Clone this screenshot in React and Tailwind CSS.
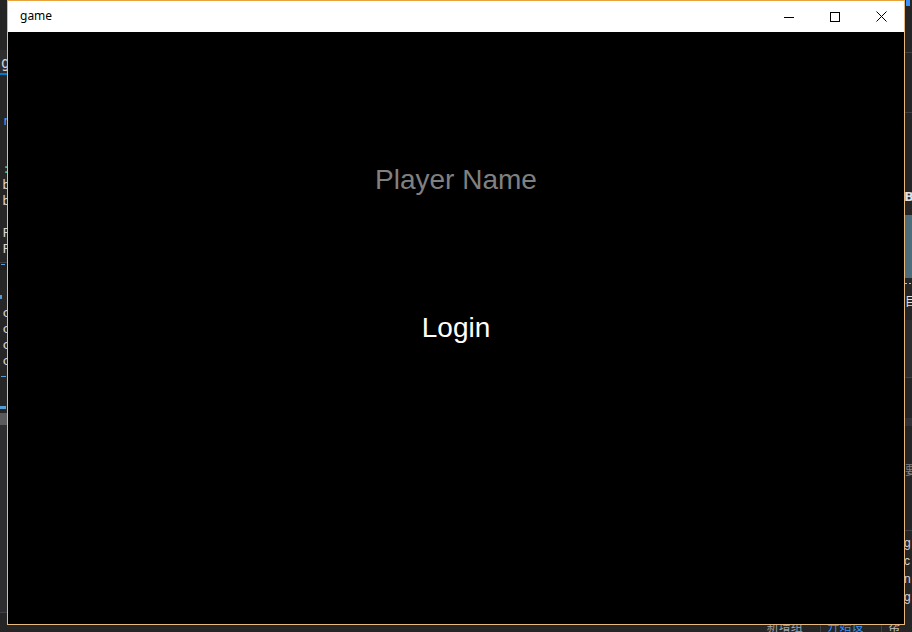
import React from "react";

// fragments of the code editor that peek out from behind the game window
const Glyph = ({ children, className = "" }) => (
  <div className={`h-4 flex justify-end leading-4 overflow-hidden ${className}`}>
    <span className="mr-[-3px]">{children}</span>
  </div>
);

const LeftEdge = () => (
  <div className="w-[7px] h-full flex flex-col bg-[#252526] overflow-hidden font-['DejaVu_Sans_Mono',monospace] text-[13px] text-[#d4d4d4]">
    <div className="h-[50px] shrink-0" />
    <div className="h-[23px] shrink-0 bg-[#2d2d30] flex items-end justify-end overflow-hidden">
      <span className="mr-[-3px] text-[15px] leading-5">g</span>
    </div>
    <div className="h-[2px] shrink-0 bg-[#007acc]" />
    <div className="h-[38px] shrink-0" />
    <Glyph className="text-[#569cd6]">r</Glyph>
    <Glyph />
    <Glyph />
    <Glyph className="text-[#4ec9b0]">:</Glyph>
    <Glyph>b</Glyph>
    <Glyph>b</Glyph>
    <Glyph />
    <Glyph>F</Glyph>
    <Glyph>F</Glyph>
    <div className="h-[5px] shrink-0" />
    <div className="h-px shrink-0 bg-[#3f3f46]" />
    <div className="h-[7px] shrink-0 bg-[#1e1e1e] pt-px pl-px">
      <div className="w-[4px] h-px bg-[#569cd6]" />
    </div>
    <div className="h-[25px] shrink-0" />
    <div className="h-[4px] w-[2px] shrink-0 bg-[#569cd6]" />
    <div className="h-[6px] shrink-0" />
    <Glyph>c</Glyph>
    <Glyph>c</Glyph>
    <Glyph>c</Glyph>
    <Glyph>c</Glyph>
    <div className="h-[7px] shrink-0" />
    <div className="h-px w-[5px] ml-px shrink-0 bg-[#569cd6]" />
    <div className="h-[29px] shrink-0" />
    <div className="h-[3px] w-[6px] shrink-0 bg-[#569cd6]" />
    <div className="h-[4px] shrink-0" />
    <div className="h-[12px] shrink-0 bg-[#5a5a5c]" />
    <div className="h-[187px] shrink-0 bg-[#2d2d30]" />
    <div className="h-px shrink-0 bg-[#3f3f46]" />
  </div>
);

const RightEdge = () => (
  <div className="flex-1 h-full flex flex-col bg-[#252526] overflow-hidden text-[12px] text-[#d4d4d4]">
    <div className="h-[6px] w-[4px] ml-px shrink-0 bg-[#3794ff]" />
    <div className="h-[46px] shrink-0" />
    <div className="h-px shrink-0 bg-[#3f3f46]" />
    <div className="h-[59px] shrink-0" />
    <div className="h-px shrink-0 bg-[#3f3f46]" />
    <div className="h-[76px] shrink-0" />
    <div className="h-4 shrink-0 leading-4 font-bold font-['DejaVu_Sans',sans-serif] text-[13px] text-[#e0e0e0] ml-[-1px]">B</div>
    <div className="h-[10px] shrink-0" />
    <div className="h-[63px] shrink-0 bg-[#4d6d7b]" />
    <div className="h-[5px] shrink-0" />
    <div className="h-px shrink-0 flex gap-[2px]">
      <div className="w-[2px] bg-[#c0c0c0]" />
      <div className="w-[2px] bg-[#c0c0c0]" />
    </div>
    <div className="h-[9px] shrink-0" />
    <div className="h-4 shrink-0 leading-4 font-['Noto_Sans_CJK_SC',sans-serif] text-[#e0e0e0]">目</div>
    <div className="h-[11px] shrink-0" />
    <div className="h-[57px] shrink-0 bg-[#2d2d30]" />
    <div className="h-px shrink-0 bg-[#3f3f46]" />
    <div className="h-[40px] shrink-0" />
    <div className="h-[8px] shrink-0 bg-[#333337]" />
    <div className="h-[36px] shrink-0" />
    <div className="h-4 shrink-0 leading-4 font-['Noto_Sans_CJK_SC',sans-serif] text-[#808080]">要</div>
    <div className="h-[52px] shrink-0" />
    <div className="h-px shrink-0 bg-[#3f3f46]" />
    <div className="flex flex-col gap-[2px] pt-[4px] font-['Liberation_Sans',sans-serif] ml-[-1px] leading-4">
      <span>g</span>
      <span>c</span>
      <span>n</span>
      <span>g</span>
    </div>
  </div>
);

const TitleButtons = () => (
  <div className="flex h-full items-center">
    <div className="w-[46px] h-full flex items-center justify-center">
      <svg width="10" height="10" viewBox="0 0 10 10">
        <path d="M0 5.5h10" stroke="#000" strokeWidth="1" />
      </svg>
    </div>
    <div className="w-[46px] h-full flex items-center justify-center">
      <svg width="10" height="10" viewBox="0 0 10 10">
        <rect x="0.5" y="0.5" width="9" height="9" fill="none" stroke="#000" strokeWidth="1" />
      </svg>
    </div>
    <div className="w-[46px] h-full flex items-center justify-center">
      <svg width="11" height="11" viewBox="0 0 11 11">
        <path d="M0.5 0.5l10 10M10.5 0.5l-10 10" stroke="#000" strokeWidth="1" />
      </svg>
    </div>
  </div>
);

export default function App() {
  return (
    <div className="w-[912px] h-[632px] bg-[#252526] flex flex-col overflow-hidden font-['Liberation_Sans',Arial,sans-serif]">
      <div className="flex h-[625px]">
        <LeftEdge />

        {/* Game window */}
        <div className="w-[898px] h-full flex flex-col border border-[#e6b980] border-t-[#e8a33c]">
          <div className="h-[31px] bg-white flex items-center justify-between">
            <span className="pl-[12px] text-[12px] text-black font-['Noto_Sans',sans-serif] leading-none pb-[1px]">
              game
            </span>
            <TitleButtons />
          </div>
          <div className="flex-1 bg-black flex flex-col items-center">
            <div className="h-[131px]" />
            <div className="text-[28px] leading-[34px] text-[#808080]">Player Name</div>
            <div className="h-[114px]" />
            <button className="text-[28px] leading-[34px] text-white">Login</button>
          </div>
        </div>

        <RightEdge />
      </div>

      {/* status strip below */}
      <div className="flex-1 flex items-start bg-[#252526] font-['Noto_Sans_CJK_SC',sans-serif] text-[12px] leading-none overflow-hidden">
        <div className="w-[772px]" />
        <span className="text-[#9da5b4] mt-[-5px]">新增组件</span>
        <div className="w-px h-full bg-[#3f3f46] mx-[6px]" />
        <span className="text-[#3794ff] mt-[-5px]">开始设置</span>
        <div className="w-px h-full bg-[#3f3f46] mx-[6px]" />
        <span className="text-[#c0c0c0] mt-[-5px]">帮助</span>
      </div>
    </div>
  );
}
